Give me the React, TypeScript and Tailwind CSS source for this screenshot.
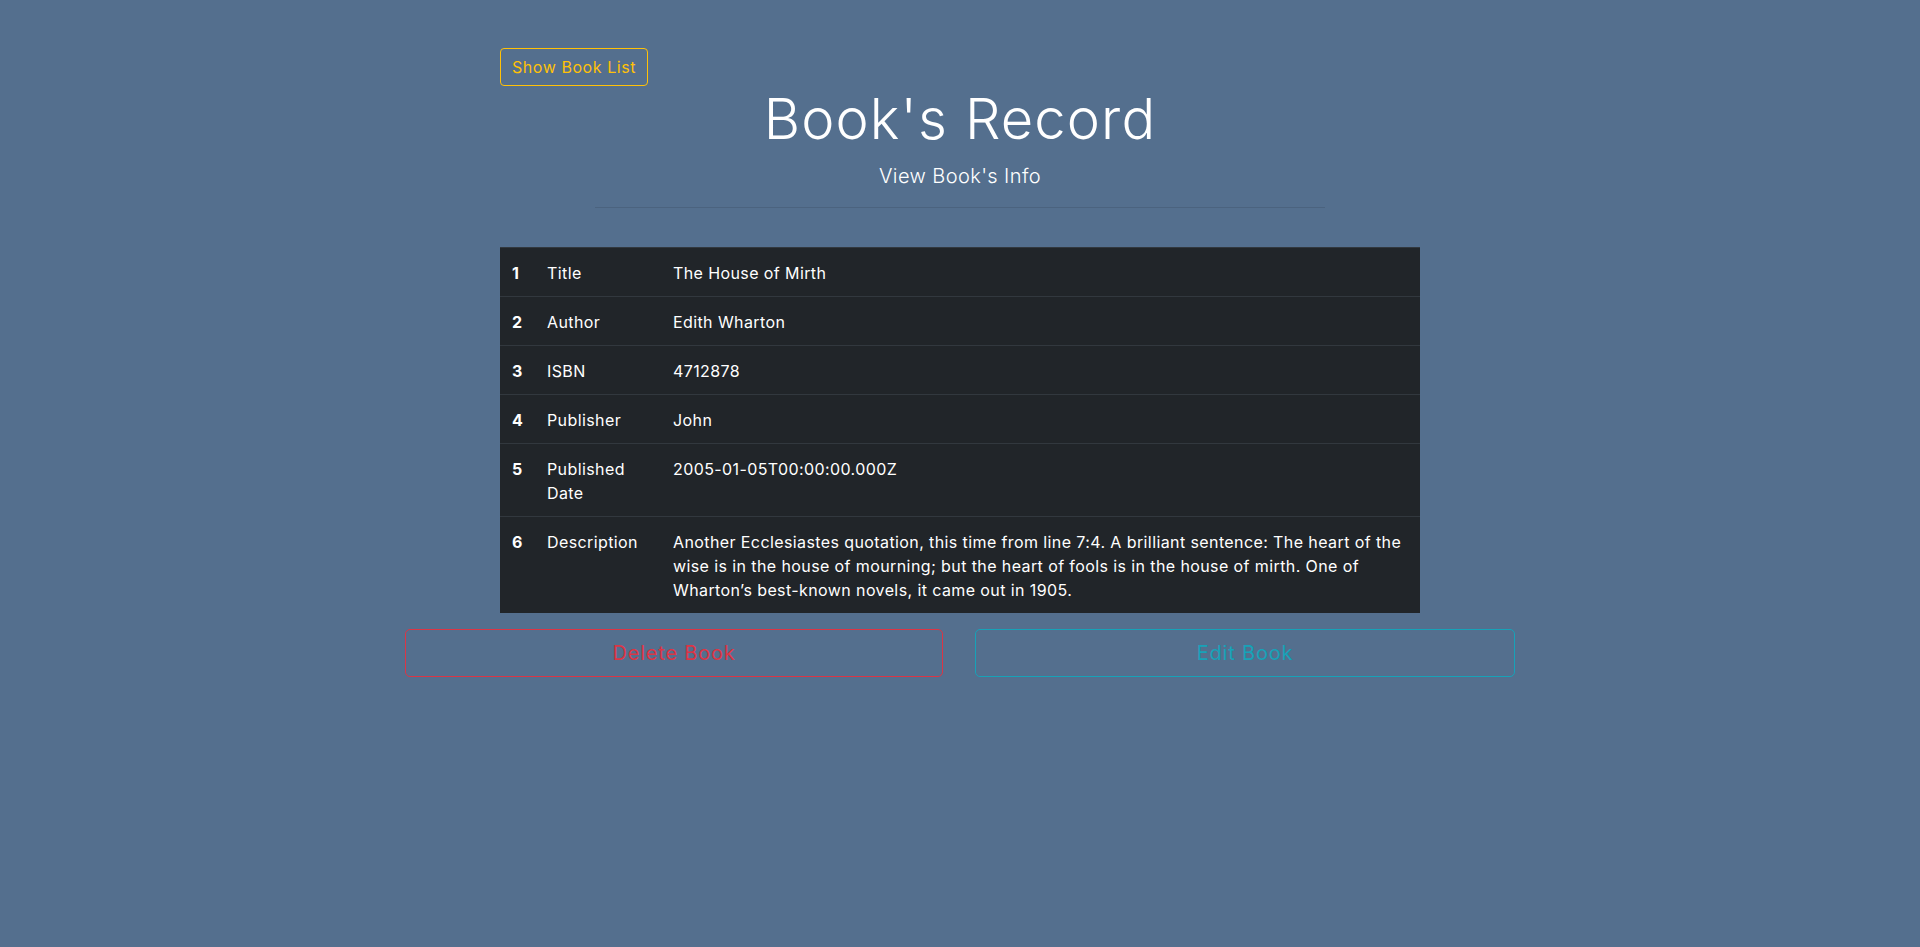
import React from "react";

const ROWS: { n: number; label: string; value: string }[] = [
  { n: 1, label: "Title", value: "The House of Mirth" },
  { n: 2, label: "Author", value: "Edith Wharton" },
  { n: 3, label: "ISBN", value: "4712878" },
  { n: 4, label: "Publisher", value: "John" },
  { n: 5, label: "Published Date", value: "2005-01-05T00:00:00.000Z" },
  {
    n: 6,
    label: "Description",
    value:
      "Another Ecclesiastes quotation, this time from line 7:4. A brilliant sentence: The heart of the wise is in the house of mourning; but the heart of fools is in the house of mirth. One of Wharton\u2019s best-known novels, it came out in 1905.",
  },
];

export default function App() {
  return (
    <div className="min-h-screen bg-[#546f8e] font-['Inter',sans-serif] tracking-[0.025em] text-white">
      <div className="mx-auto w-[1140px] px-[15px]">
        {/* back link */}
        <div className="mx-auto w-[920px] pt-12">
          <button className="h-[38px] px-[11px] border border-[#ffc107] text-[#ffc107] rounded-[4px] text-base leading-6 tracking-[0.035em]">
            Show Book List
          </button>
        </div>

        {/* header */}
        <div className="mx-auto w-[730px] text-center">
          <h1 className="text-[56px] font-light leading-[67px] tracking-[0.02em] mb-2">Book's Record</h1>
          <p className="text-xl font-light leading-[30px]">View Book's Info</p>
          <hr className="mt-4 border-0 border-t border-black/10" />
        </div>

        {/* details */}
        <div className="mx-auto w-[920px] mt-[39px]">
          <table className="w-full table-fixed bg-[#212529] text-base leading-6">
            <colgroup>
              <col className="w-[35px]" />
              <col className="w-[126px]" />
              <col />
            </colgroup>
            <tbody>
              {ROWS.map((r) => (
                <tr key={r.n} className="border-t border-[#32383e] hover:bg-white/5">
                  <th className="pt-[13px] pb-[11px] pl-3 pr-0 text-left align-top font-bold">{r.n}</th>
                  <td className="pt-[13px] pb-[11px] px-3 align-top">{r.label}</td>
                  <td className="pt-[13px] pb-[11px] px-3 align-top">{r.value}</td>
                </tr>
              ))}
            </tbody>
          </table>
        </div>

        {/* actions */}
        <div className="mt-4 grid grid-cols-2 gap-[30px]">
          <button className="w-[538px] h-12 border border-[#dc3545] text-[#dc3545] rounded-[5px] text-xl leading-[30px] tracking-[0.04em]">
            Delete Book
          </button>
          <button className="h-12 border border-[#17a2b8] text-[#17a2b8] rounded-[5px] text-xl leading-[30px] tracking-[0.04em]">
            Edit Book
          </button>
        </div>
      </div>
    </div>
  );
}
